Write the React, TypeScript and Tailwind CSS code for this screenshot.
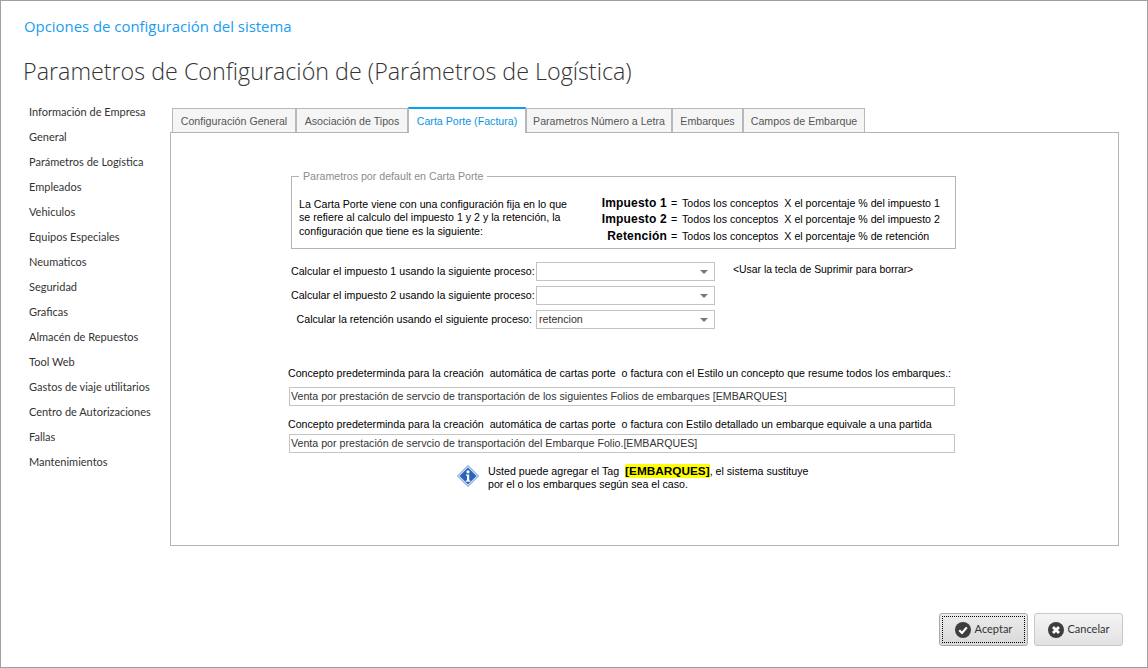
const menu = [
  'Información de Empresa',
  'General',
  'Parámetros de Logística',
  'Empleados',
  'Vehiculos',
  'Equipos Especiales',
  'Neumaticos',
  'Seguridad',
  'Graficas',
  'Almacén de Repuestos',
  'Tool Web',
  'Gastos de viaje utilitarios',
  'Centro de Autorizaciones',
  'Fallas',
  'Mantenimientos',
]

const tabs = [
  { label: 'Configuración General', width: 'w-[124px]' },
  { label: 'Asociación de Tipos', width: 'w-[112px]' },
  { label: 'Carta Porte (Factura)', width: 'w-[118px]', active: true },
  { label: 'Parametros Número a Letra', width: 'w-[146px]' },
  { label: 'Embarques', width: 'w-[71px]' },
  { label: 'Campos de Embarque', width: 'w-[122px]' },
]

const formulas = [
  { name: 'Impuesto 1', rest: 'del impuesto 1' },
  { name: 'Impuesto 2', rest: 'del impuesto 2' },
  { name: 'Retención', rest: 'de retención' },
]

const combos = [
  { label: 'Calcular el impuesto 1 usando la siguiente proceso:', value: '' },
  { label: 'Calcular el impuesto 2 usando la siguiente proceso:', value: '' },
  { label: 'Calcular la retención usando el siguiente proceso:', value: 'retencion' },
]

const InfoIcon = () => (
  <svg width="22" height="22" viewBox="0 0 22 22" className="shrink-0">
    <path d="M11 0.5 21.5 11 11 21.5 0.5 11Z" fill="#dbe8f7" stroke="#5f93d3" />
    <path d="M11 2.5 19.5 11 11 19.5 2.5 11Z" fill="#2a66b8" />
    <circle cx="11" cy="6.8" r="1.6" fill="#fff" />
    <path d="M9 9.5h3.2v6H13.4v1.2H8.8v-1.2H10v-4.8H9Z" fill="#fff" />
  </svg>
)

const CheckIcon = () => (
  <svg width="16" height="16" viewBox="0 0 16 16">
    <circle cx="8" cy="8" r="8" fill="#3d3d3d" />
    <path d="M4.2 8.3 7 11l4.8-5.6" fill="none" stroke="#fff" strokeWidth="2.2" />
  </svg>
)

const CrossIcon = () => (
  <svg width="16" height="16" viewBox="0 0 16 16">
    <circle cx="8" cy="8" r="8" fill="#3d3d3d" />
    <path d="M5 5l6 6M11 5l-6 6" fill="none" stroke="#fff" strokeWidth="2.8" />
  </svg>
)

const App = () => (
  <div className="flex h-[668px] w-[1148px] flex-col overflow-hidden border border-[#a0a0a0] bg-white font-['Liberation_Sans',sans-serif] text-[10.65px] text-black">
    <header className="pl-[23px] pt-[15px] font-['Open_Sans',sans-serif]">
      <h2 className="h-[20px] text-[14.9px] leading-[20px] text-[#1a9cf0]">Opciones de configuración del sistema</h2>
      <h1 className="-ml-px mt-[17px] h-[36px] text-[23.3px] font-light leading-[36px] text-[#333]">
        Parametros de Configuración de (Parámetros de Logística)
      </h1>
    </header>

    <div className="mt-[16px] flex">
      <nav className="-mt-[6px] w-[169px] pl-[28px] font-['Lato',sans-serif]">
        <ul>
          {menu.map((item) => (
            <li key={item} className="h-[25px] text-[11px] leading-[25px] text-[#333]">{item}</li>
          ))}
        </ul>
      </nav>

      <div className="w-[949px] pt-[2px]">
        <div className="flex h-[25px] items-end pl-[2px]">
          {tabs.map((tab) =>
            tab.active ? (
              <div key={tab.label} className={`${tab.width} -mb-px h-[26px] border-x border-t-2 border-x-[#b8b8b8] border-t-[#00a2f3] bg-white text-center leading-[25px] text-[#0a94e0]`}>
                {tab.label}
              </div>
            ) : (
              <div key={tab.label} className={`${tab.width} h-[24px] border border-b-0 border-[#b8b8b8] bg-[#f5f5f5] text-center leading-[25px] text-[#555]`}>
                {tab.label}
              </div>
            ),
          )}
        </div>

        <section className="h-[414px] border border-[#b4b4b4] pl-[120px] pt-[36px]">
          <fieldset className="h-[80px] w-[665px] border border-[#b4b4b4] pl-[7px]">
            <legend className="px-[4px] text-[#8c8c8c]">Parametros por default en Carta Porte</legend>
            <div className="flex pt-[13px]">
              <p className="w-[275px] leading-[13.5px]">
                La Carta Porte viene con una configuración fija en lo que se refiere al calculo del impuesto 1 y 2 y la retención, la configuración que tiene es la siguiente:
              </p>
              <div className="-mt-[3px] ml-[20px] whitespace-nowrap leading-[16.5px]">
                {formulas.map((f) => (
                  <div key={f.name} className="flex">
                    <span className="w-[73px] text-right text-[12px] font-bold tracking-[0.2px]">{f.name}</span>
                    <span className="w-[14px] text-center">=</span>
                    <span className="ml-[1px]">Todos los conceptos &nbsp;X el porcentaje % {f.rest}</span>
                  </div>
                ))}
              </div>
            </div>
          </fieldset>

          <div className="mt-[13px] flex">
            <div className="flex flex-col gap-[5px]">
              {combos.map((c) => (
                <div key={c.label} className="flex h-[19px] items-center">
                  <label className="w-[242px] whitespace-nowrap pr-[1px] text-right">{c.label}</label>
                  <div className="ml-[3px] flex h-[19px] w-[179px] items-center justify-between border border-[#c4c4c4] pl-[2px] pr-[6px] text-[#333]">
                    <span>{c.value}</span>
                    <span className="h-0 w-0 border-x-[4px] border-t-[4px] border-x-transparent border-t-[#777]" />
                  </div>
                </div>
              ))}
            </div>
            <p className="ml-[18px] mt-[1px] text-[10.4px] leading-[13px]">&lt;Usar la tecla de Suprimir para borrar&gt;</p>
          </div>

          <div className="-ml-[3px] mt-[37px] w-[667px]">
            <p className="h-[14px] whitespace-nowrap leading-[14px]">
              Concepto predeterminda para la creación &nbsp;automática de cartas porte &nbsp;o factura con el Estilo un concepto que resume todos los embarques.:
            </p>
            <div className="ml-[1px] mt-[7px] h-[19px] w-[666px] border border-[#c4c4c4] pl-[1px] leading-[17px] text-[#333]">
              Venta por prestación de servcio de transportación de los siguientes Folios de embarques [EMBARQUES]
            </div>
            <p className="mt-[11px] h-[14px] whitespace-nowrap leading-[14px]">
              Concepto predeterminda para la creación &nbsp;automática de cartas porte &nbsp;o factura con Estilo detallado un embarque equivale a una partida
            </p>
            <div className="ml-[1px] mt-[3px] h-[19px] w-[666px] border border-[#c4c4c4] pl-[1px] leading-[17px] text-[#333]">
              Venta por prestación de servcio de transportación del Embarque Folio.[EMBARQUES]
            </div>
          </div>

          <div className="ml-[166px] mt-[12px] flex gap-[9px]">
            <InfoIcon />
            <p className="leading-[13px]">
              Usted puede agregar el Tag <span className="ml-[3px] bg-[#ffff00] text-[11.8px] font-bold">[EMBARQUES]</span>, el sistema sustituye
              <br />
              por el o los embarques según sea el caso.
            </p>
          </div>
        </section>
      </div>
    </div>

    <footer className="mt-[67px] flex justify-end gap-[6px] pr-[24px] font-['Lato',sans-serif] text-[11px] text-[#333]">
      <button className="flex h-[33px] w-[89px] items-center justify-center rounded-[3px] border border-[#aaa] bg-gradient-to-b from-[#ececec] to-[#d8d8d8] p-[2px]">
        <span className="flex h-full w-full items-center justify-center gap-[4px] border border-dotted border-black">
          <CheckIcon />
          Aceptar
        </span>
      </button>
      <button className="flex h-[33px] w-[89px] items-center justify-center gap-[4px] rounded-[3px] border border-[#c8c8c8] bg-gradient-to-b from-[#f4f4f4] to-[#e2e2e2]">
        <CrossIcon />
        Cancelar
      </button>
    </footer>
  </div>
)

export default App
